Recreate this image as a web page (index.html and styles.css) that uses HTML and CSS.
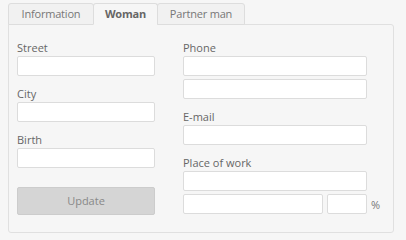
FILE: index.html
```html
<!DOCTYPE html>
<html>
<head>
<meta charset="utf-8">
<link rel="stylesheet" href="styles.css">
</head>
<body>
<div class="tabs">
  <div class="tab t-info">Information</div>
  <div class="tab t-woman active">Woman</div>
  <div class="tab t-partner">Partner man</div>
</div>
<div class="panel">
  <div class="col left">
    <div class="field"><label>Street</label><div class="input"></div></div>
    <div class="field"><label>City</label><div class="input"></div></div>
    <div class="field"><label>Birth</label><div class="input"></div></div>
    <div class="button">Update</div>
  </div>
  <div class="col right">
    <div class="field"><label>Phone</label><div class="input"></div><div class="input"></div></div>
    <div class="field"><label>E-mail</label><div class="input"></div></div>
    <div class="field"><label>Place of work</label><div class="input"></div>
      <div class="row"><div class="input grow"></div><div class="input small"></div><span class="pct">%</span></div>
    </div>
  </div>
</div>
</body>
</html>
```
FILE: styles.css
```css
html, body {
  margin: 0;
  padding: 0;
  background: #f6f6f6;
  font-family: "Open Sans", "Noto Sans", sans-serif;
  font-size: 11px;
  color: #666;
}
.tabs {
  display: flex;
  margin-left: 8px;
  padding-top: 3px;
  position: relative;
  z-index: 1;
}
.tab {
  box-sizing: border-box;
  height: 22px;
  line-height: 20px;
  text-align: center;
  border: 1px solid #ddd;
  border-radius: 3px 3px 0 0;
  background: #f1f1f1;
  color: #777;
  margin-right: -1px;
  white-space: nowrap;
  letter-spacing: -0.2px;
}
.t-info { width: 86px; }
.t-woman { width: 65px; }
.t-partner { width: 88px; }
.tab.active {
  background: #f6f6f6;
  font-weight: bold;
  color: #666;
  border-bottom-color: #f6f6f6;
}
.panel {
  margin: -1px 0 0 8px;
  width: 368px;
  height: 192px;
  padding: 15px 8px 0 8px;
  border: 1px solid #e0e0e0;
  border-radius: 0 3px 3px 3px;
  background: #f6f6f6;
  display: grid;
  grid-template-columns: 138px 184px;
  column-gap: 28px;
  align-content: start;
}
.field {
  display: flex;
  flex-direction: column;
  gap: 3px;
  margin-bottom: 10px;
}
.field label {
  display: block;
  height: 16px;
  line-height: 16px;
  margin-bottom: -3px;
}
.input {
  height: 18px;
  border: 1px solid #dcdcdc;
  border-radius: 2px;
  background: #fff;
}
.row {
  display: flex;
  align-items: center;
  gap: 4px;
  margin-right: -14px;
}
.grow { flex: 1; }
.small { width: 38px; }
.pct { width: 10px; color: #777; }
.button {
  margin-top: 19px;
  height: 26px;
  line-height: 26px;
  border: 1px solid #ccc;
  border-radius: 2px;
  background: #d5d5d5;
  color: #888;
  text-align: center;
}
```
